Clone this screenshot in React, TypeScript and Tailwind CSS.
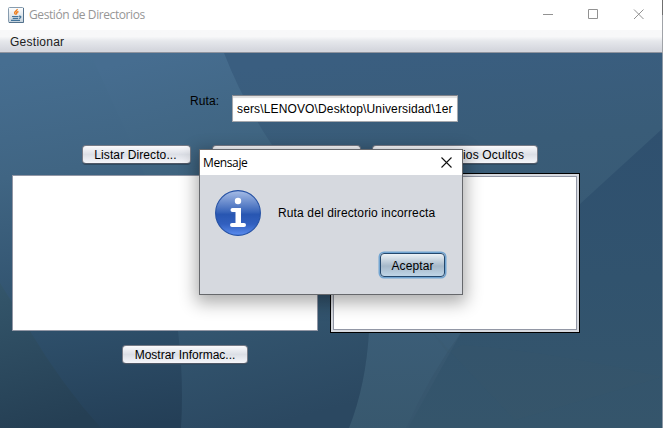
import React from "react";

function JavaIcon() {
  return (
    <svg className="block h-4 w-4" viewBox="0 0 16 16" fill="none">
      <defs>
        <linearGradient id="cup" x1="0" y1="0" x2="0" y2="1">
          <stop offset="0" stopColor="#fff" />
          <stop offset="1" stopColor="#c5d2dc" />
        </linearGradient>
      </defs>
      <rect x=".5" y=".5" width="15" height="15" rx="1" fill="url(#cup)" stroke="#879caf" />
      <path d="M15.500 1v14.500H1" stroke="#54728d" />
      <path d="M9.200 2c.4 1.800-3.400 2.600-2.500 4.300.3.500 1 .9 1.100 1.400M10.500 4.500C8.600 5.200 7.900 5.900 9 7.300" stroke="#ee7d1c" strokeWidth="1.400" />
      <path d="M4 9.500h6.500M4.700 11.300h5.500M3 13.400h9M11 9.300c2.500-.5 2.500 1.600 0 2" stroke="#42739a" strokeWidth="1.200" />
    </svg>
  );
}

function Backdrop() {
  return (
    <svg className="absolute inset-0 h-full w-full" viewBox="0 53 662 375" preserveAspectRatio="none">
      <defs>
        <linearGradient id="base" gradientUnits="userSpaceOnUse" x1="420" y1="53" x2="450" y2="428">
          <stop offset="0" stopColor="#3a5e80" />
          <stop offset=".25" stopColor="#395c78" />
          <stop offset="1" stopColor="#37566d" />
        </linearGradient>
        <linearGradient id="far" gradientUnits="userSpaceOnUse" x1="70" y1="53" x2="130" y2="428">
          <stop offset="0" stopColor="#466e91" />
          <stop offset=".3" stopColor="#406583" />
          <stop offset=".72" stopColor="#2e4f6a" />
          <stop offset="1" stopColor="#243f57" />
        </linearGradient>
        <linearGradient id="mid" gradientUnits="userSpaceOnUse" x1="160" y1="53" x2="260" y2="428">
          <stop offset="0" stopColor="#466d90" />
          <stop offset=".3" stopColor="#3f6480" />
          <stop offset=".72" stopColor="#33556f" />
          <stop offset="1" stopColor="#2b4861" />
        </linearGradient>
        <linearGradient id="corner" gradientUnits="userSpaceOnUse" x1="0" y1="283" x2="40" y2="428">
          <stop offset="0" stopColor="#34566b" />
          <stop offset="1" stopColor="#253f54" />
        </linearGradient>
        <linearGradient id="wedge" gradientUnits="userSpaceOnUse" x1="620" y1="129" x2="620" y2="428">
          <stop offset="0" stopColor="#2f506f" />
          <stop offset=".5" stopColor="#31536e" />
          <stop offset="1" stopColor="#35556b" />
        </linearGradient>
        <linearGradient id="light" gradientUnits="userSpaceOnUse" x1="370" y1="331" x2="370" y2="428">
          <stop offset="0" stopColor="#3b5d77" />
          <stop offset="1" stopColor="#38586e" />
        </linearGradient>
      </defs>
      <path d="M0 53H662V428H0Z" fill="url(#base)" />
      <path d="M662 129L581 203L462 331L408 428H662Z" fill="url(#wedge)" />
      <path d="M369 331H462Q430 374 406 428H349Q366 385 369 331Z" fill="url(#light)" />
      <path d="M431 331L515 420L662 377Q555 352 462 345L448 353Z" fill="#3c5a6c" opacity=".18" />
      <path d="M0 53H224Q243 102 272 145Q371 265 369 331Q366 385 349 428H0Z" fill="url(#mid)" />
      <path d="M0 53H90L121 120Q174 230 178 331Q184 380 181 428H0Z" fill="url(#far)" />
      <path d="M0 283L30 331Q62 385 101 428H0Z" fill="url(#corner)" />
    </svg>
  );
}

const buttonFace =
  "flex h-[19px] items-center justify-center whitespace-nowrap rounded-[4px] border border-[#777b86] border-b-[#505866] bg-linear-to-b from-[#fafafc] via-[#dcdfe6] to-[#f5f6fa] pt-[2px] text-[12px] leading-[17px] shadow-[0_1px_0_#2e4b62]";

export default function App() {
  return (
    <div className="relative flex h-[428px] w-[663px] overflow-hidden bg-white font-['Liberation_Sans',sans-serif] text-[12px] text-black">
      <div className="flex w-[662px] flex-col">
        <header className="flex h-[30px] shrink-0 items-center bg-white pl-2">
          <JavaIcon />
          <span className="ml-[5px] grow whitespace-nowrap font-['Open_Sans',sans-serif] text-[12px] leading-[16px] tracking-[-0.41px] text-[#969696]">
            Gestión de Directorios
          </span>
          <svg className="h-[30px] w-[124px]" viewBox="538 0 124 30" fill="none" stroke="#929292">
            <path d="M543 14.500h10M588.500 9.500h9v9h-9zM634 9.500l9.500 9.500M643.500 9.500l-9.500 9.500" />
          </svg>
        </header>
        <nav className="flex h-[23px] shrink-0 items-center border-b border-[#8f949f] bg-linear-to-b from-[#f8f8f9] from-30% via-[#e6e8ec] via-50% to-[#d5d7de] to-90% pl-[10px]">
          <span className="pt-px leading-[22px] tracking-[0.26px] text-[#202020]">Gestionar</span>
        </nav>
        <main className="relative h-[375px] overflow-hidden">
          <Backdrop />
          <div className="relative flex flex-col">
            <div className="flex h-[92px] pl-[190px] pt-[42px]">
              <label className="w-[42px] leading-[13px] tracking-[0.1px]">Ruta:</label>
              <div className="flex h-[27px] w-[226px] items-center whitespace-nowrap border border-[#a5a8ad] border-t-[#80838a] bg-white pl-[4px] tracking-[0.14px] shadow-[inset_0_2px_1px_#dedede]">
                sers\LENOVO\Desktop\Universidad\1er
              </div>
            </div>
            <div className="flex h-[28px] pl-[82px]">
              <button className={buttonFace + " w-[109px] pr-[2px] tracking-[0.1px]"}>Listar Directo...</button>
              <button className={buttonFace + " ml-[21px] w-[149px]"} />
              <button className={buttonFace + " ml-[11px] w-[166px] tracking-[0.16px]"}>Listar Directorios Ocultos</button>
            </div>
            <div className="flex items-start pl-3">
              <div className="mt-[2px] h-[156px] w-[306px] border border-[#9297a5] bg-white" />
              <div className="ml-3 h-[160px] w-[250px] border border-black bg-[#d6d9df] p-[2px]">
                <div className="h-full border border-[#9297a5] bg-white" />
              </div>
            </div>
            <div className="flex pl-[122px] pt-3">
              <button className={buttonFace + " w-[126px]"}>Mostrar Informac...</button>
            </div>
          </div>
        </main>
      </div>
      <div className="flex w-px flex-col bg-[#8c98a5]">
        <div className="h-[15px] bg-[#6f6f6f]" />
        <div className="h-[38px] bg-[#a0a3a8]" />
      </div>

      <section className="absolute left-[199px] top-[149px] flex h-[146px] w-[264px] flex-col border border-[#66686c] bg-[#d6d9df] shadow-[0_5px_16px_3px_rgba(0,0,0,0.32)]">
        <div className="flex h-[25px] shrink-0 items-center justify-between bg-white pl-[3px] pr-[10px]">
          <span className="font-['Open_Sans',sans-serif] text-[12px] leading-[24px] tracking-[-0.38px]">Mensaje</span>
          <svg className="h-[11px] w-[11px]" viewBox="0 0 11 11" stroke="#111" strokeWidth="1.100">
            <path d="M.5.5l10 10M10.500.5l-10 10" />
          </svg>
        </div>
        <div className="flex items-center pl-[15px] pt-[15px]">
          <svg className="h-[46px] w-[46px]" viewBox="0 0 46 46">
            <defs>
              <linearGradient id="info" x1="0" y1="0" x2="0" y2="1">
                <stop offset="0" stopColor="#a7bde6" />
                <stop offset=".48" stopColor="#3864b9" />
                <stop offset=".53" stopColor="#2856b1" />
                <stop offset=".75" stopColor="#3260bf" />
                <stop offset="1" stopColor="#5b8df0" />
              </linearGradient>
            </defs>
            <circle cx="23" cy="23" r="22.400" fill="url(#info)" stroke="#2551a4" strokeWidth="1.100" />
            <circle cx="23" cy="11" r="3.200" fill="#fff" />
            <path d="M17.500 18H26v15h3a2 2 0 0 1 0 4H17a2 2 0 0 1 0-4h3.500V22h-3a2 2 0 0 1 0-4Z" fill="#fff" />
          </svg>
          <span className="ml-[17px] whitespace-nowrap tracking-[0.13px]">Ruta del directorio incorrecta</span>
        </div>
        <div className="flex justify-end pr-[17px] pt-[17px]">
          <button className="flex h-[24px] w-[65px] items-center justify-center rounded-[4px] border border-[#24486d] bg-linear-to-b from-[#edf2f6] via-[#a5b8c9] via-55% to-[#bfd5e7] pt-px leading-[20px] tracking-[0.1px] shadow-[0_0_0_1.500px_#72a5d2]">
            Aceptar
          </button>
        </div>
      </section>
    </div>
  );
}
